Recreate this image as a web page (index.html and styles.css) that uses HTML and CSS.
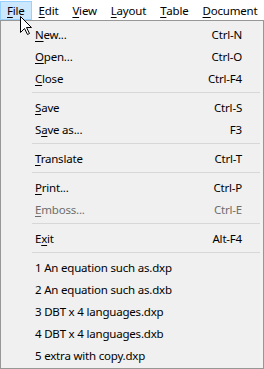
FILE: index.html
```html
<!DOCTYPE html>
<html lang="en">

<head>
    <meta charset="UTF-8">
    <title>File menu</title>
    <link rel="stylesheet" href="styles.css">
</head>

<body>
    <div class="menubar">
        <span class="top-item active"><u>F</u>ile</span>
        <span class="top-item"><u>E</u>dit</span>
        <span class="top-item"><u>V</u>iew</span>
        <span class="top-item"><u>L</u>ayout</span>
        <span class="top-item"><u>T</u>able</span>
        <span class="top-item"><u>D</u>ocument</span>
    </div>

    <div class="dropdown">
        <div class="item"><span><u>N</u>ew...</span><span class="key">Ctrl-N</span></div>
        <div class="item"><span><u>O</u>pen...</span><span class="key">Ctrl-O</span></div>
        <div class="item"><span><u>C</u>lose</span><span class="key">Ctrl-F4</span></div>
        <div class="sep"></div>
        <div class="item"><span><u>S</u>ave</span><span class="key">Ctrl-S</span></div>
        <div class="item"><span>S<u>a</u>ve as...</span><span class="key">F3</span></div>
        <div class="sep"></div>
        <div class="item"><span><u>T</u>ranslate</span><span class="key">Ctrl-T</span></div>
        <div class="sep"></div>
        <div class="item"><span><u>P</u>rint...</span><span class="key">Ctrl-P</span></div>
        <div class="item disabled"><span><u>E</u>mboss...</span><span class="key">Ctrl-E</span></div>
        <div class="sep"></div>
        <div class="item"><span>E<u>x</u>it</span><span class="key">Alt-F4</span></div>
        <div class="sep"></div>
        <div class="item"><span>1 An equation such as.dxp</span></div>
        <div class="item"><span>2 An equation such as.dxb</span></div>
        <div class="item"><span>3 DBT x 4 languages.dxp</span></div>
        <div class="item"><span>4 DBT x 4 languages.dxb</span></div>
        <div class="item"><span>5 extra with copy.dxp</span></div>
    </div>

    <!-- mouse pointer over the File entry -->
    <svg class="cursor" width="13" height="20" viewBox="0 0 13 20">
        <path d="M0.5 0.5 L0.5 16.5 L4.5 12.5 L7.5 18.5 L9.5 17.5 L6.5 11.5 L11.5 11.5 Z" fill="#fff" stroke="#000" stroke-width="1" stroke-linejoin="miter"/>
    </svg>
</body>

</html>
```

FILE: styles.css
```css
body {
    margin: 0;
    font-family: 'Noto Sans', 'Open Sans', sans-serif;
    font-size: 11.5px;
    letter-spacing: -0.2px;
    color: #000;
    background-color: #fff;
    width: 264px;
    height: 369px;
    overflow: hidden;
    position: relative;
}

u {
    text-decoration: underline;
    text-underline-offset: 2px;
}

.menubar {
    display: flex;
    height: 20px;
    align-items: stretch;
    background-color: #fff;
}

.top-item {
    display: flex;
    align-items: center;
    padding: 0 6px;
    border: 1px solid transparent;
    margin-top: 1px;
}

.top-item.active {
    background-color: #cce8ff;
    border-color: #99d1ff;
}

.dropdown {
    box-sizing: border-box;
    height: 349px;
    padding: 2px;
    border: 1px solid #979797;
    background-color: #f0f0f0;
    box-shadow: inset -3px 0 0 #f2f2f2;
}

.item {
    display: flex;
    justify-content: space-between;
    align-items: center;
    height: 22px;
    padding: 0 19px 0 32px;
}

.item.disabled {
    color: #6d6d6d;
}

.sep {
    height: 1px;
    margin: 3px 1px 3px 29px;
    background-color: #d7d7d7;
}

.cursor {
    position: absolute;
    left: 20px;
    top: 16px;
}
```
